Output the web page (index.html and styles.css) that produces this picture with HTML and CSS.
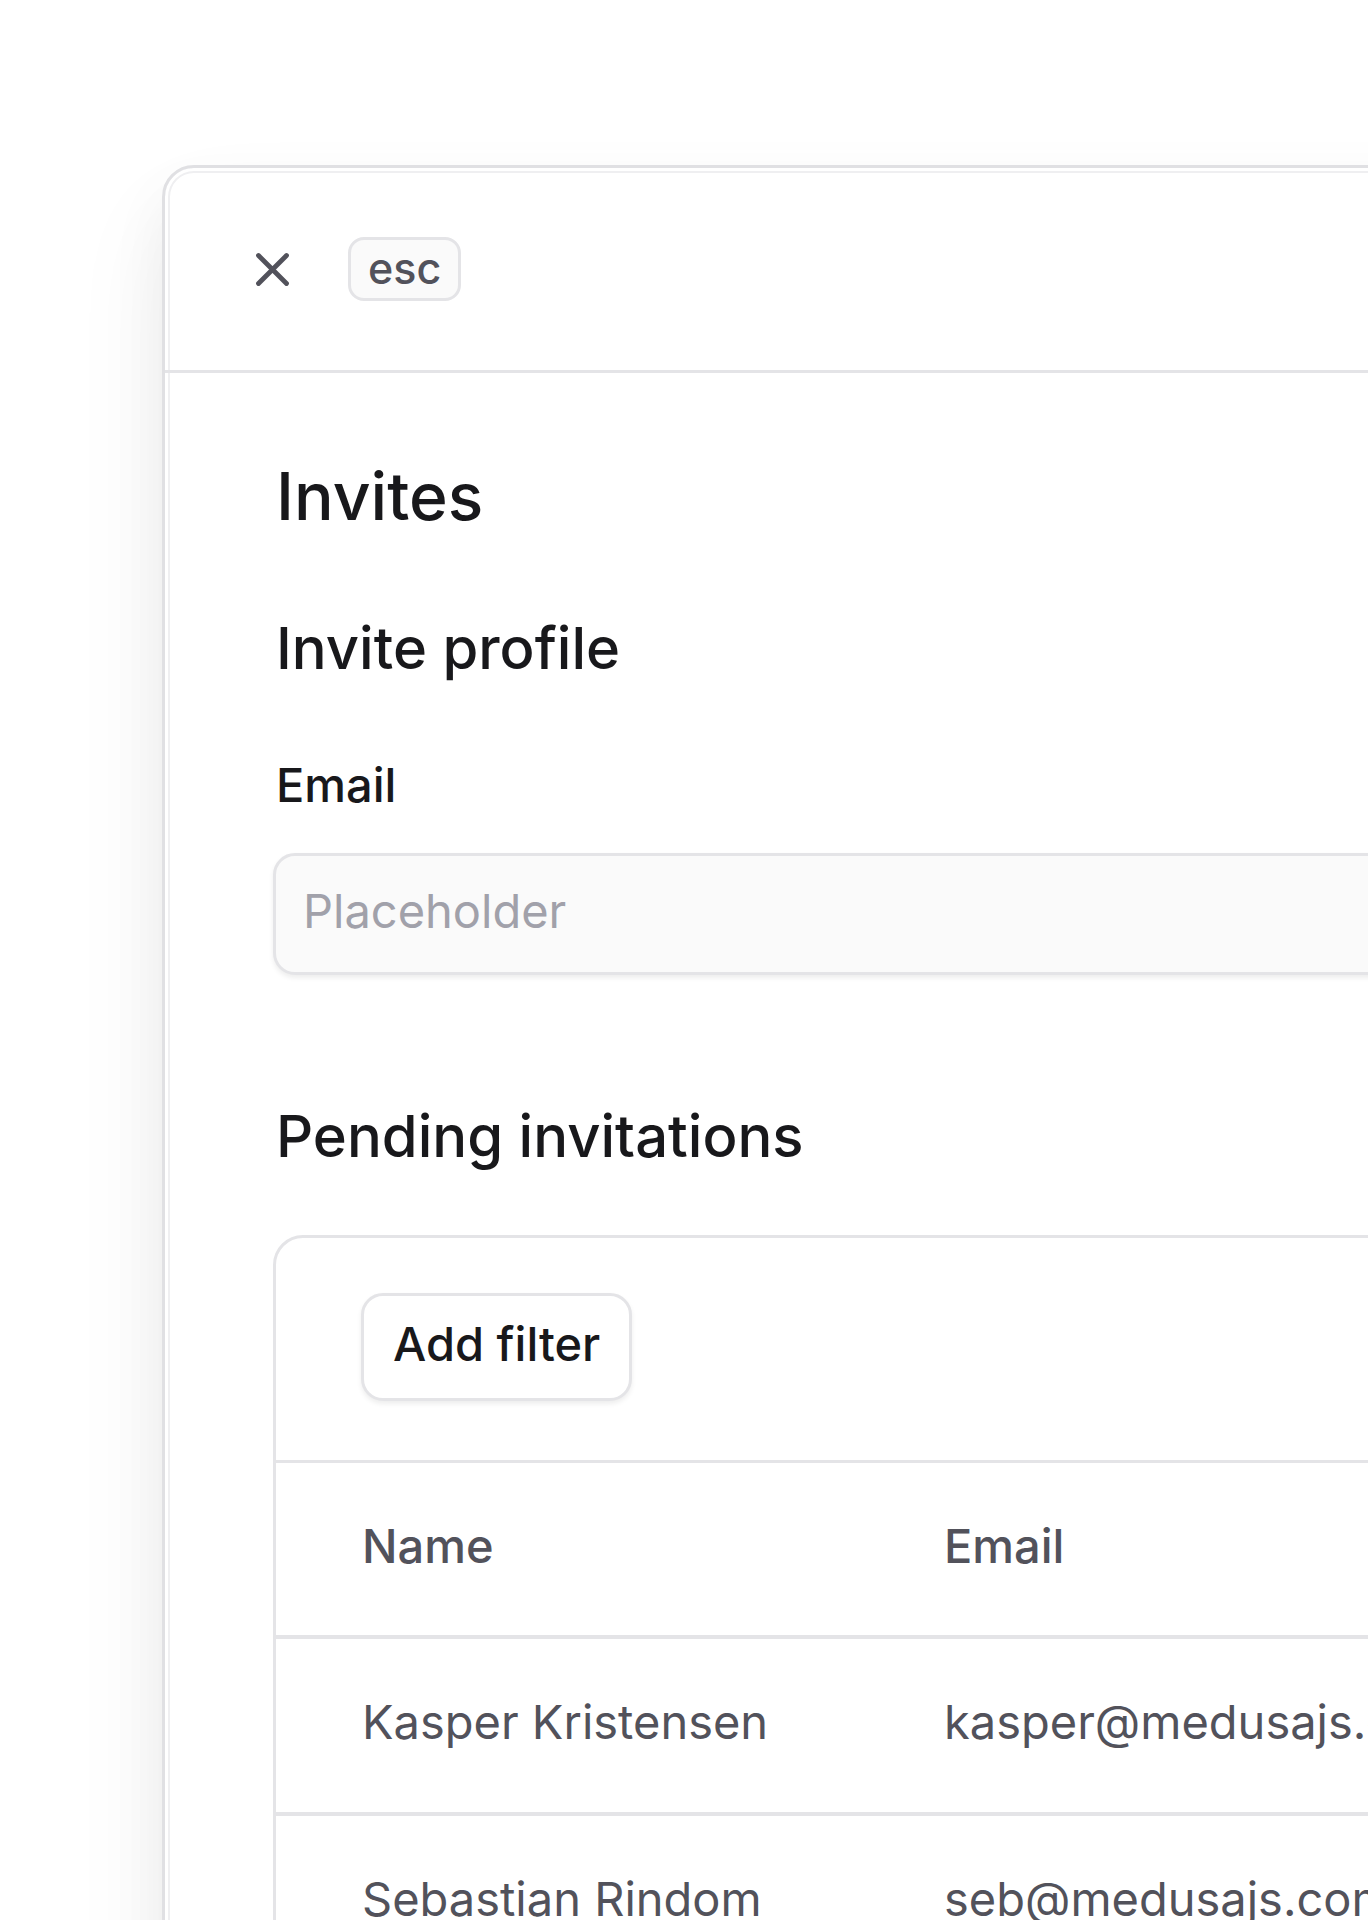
FILE: index.html
```html
<!DOCTYPE html>
<html lang="en">
<head>
<meta charset="utf-8">
<title>Invites</title>
<link rel="stylesheet" href="styles.css">
</head>
<body>
<div class="page">
  <div class="modal">
    <header class="modal-header">
      <button class="icon-btn" type="button" aria-label="Close">
        <svg width="45" height="45" viewBox="0 0 45 45" fill="none" aria-hidden="true">
          <path d="M8.5 8.5L36.5 36.5M36.5 8.5L8.5 36.5" stroke="#52525b" stroke-width="4.8" stroke-linecap="round"/>
        </svg>
      </button>
      <kbd class="kbd">esc</kbd>
    </header>
    <main class="modal-body">
      <h1 class="h1">Invites</h1>
      <section class="invite">
        <h2 class="h2">Invite profile</h2>
        <label class="label" for="email">Email</label>
        <input id="email" class="input" type="email" placeholder="Placeholder">
      </section>
      <section class="pending">
        <h2 class="h2">Pending invitations</h2>
        <div class="table-card">
          <div class="toolbar">
            <button class="btn" type="button">Add filter</button>
          </div>
          <table class="table">
            <colgroup>
              <col class="col-name">
              <col>
            </colgroup>
            <thead>
              <tr>
                <th>Name</th>
                <th>Email</th>
              </tr>
            </thead>
            <tbody>
              <tr>
                <td>Kasper Kristensen</td>
                <td>kasper@medusajs.com</td>
              </tr>
              <tr>
                <td>Sebastian Rindom</td>
                <td>seb@medusajs.com</td>
              </tr>
            </tbody>
          </table>
        </div>
      </section>
    </main>
  </div>
</div>
</body>
</html>
```

FILE: styles.css
```css
* {
  box-sizing: border-box;
}

html,
body {
  margin: 0;
  padding: 0;
}

body {
  width: 1368px;
  height: 1920px;
  overflow: hidden;
  background: #ffffff;
  font-family: Inter, "Noto Sans", "Liberation Sans", sans-serif;
  color: #18181b;
}

.page {
  padding: 165px 0 0 162px;
}

.modal {
  width: 1500px;
  min-height: 1900px;
  background: #ffffff;
  border: 3px solid #e0e0e3;
  border-radius: 32px;
  box-shadow:
    inset 0 0 0 3px #ffffff,
    inset 0 0 0 5px #efeff1,
    0 30px 60px rgba(0, 0, 0, 0.05),
    0 50px 100px rgba(0, 0, 0, 0.06);
}

.modal-header {
  display: flex;
  align-items: center;
  gap: 53px;
  height: 205px;
  padding-left: 85px;
  border-bottom: 3px solid #e4e4e7;
}

.icon-btn {
  display: flex;
  width: 45px;
  height: 45px;
  padding: 0;
  border: 0;
  background: none;
}

.kbd {
  display: inline-flex;
  align-items: center;
  height: 64px;
  padding: 0 17px 2px;
  border: 3px solid #e4e4e7;
  border-radius: 16px;
  background: #fafafa;
  font-family: inherit;
  font-size: 43px;
  font-weight: 500;
  line-height: 1.21;
  color: #52525b;
}

.modal-body {
  padding: 83px 108px 0 108px;
}

.h1 {
  margin: 0 0 0 3px;
  font-size: 66px;
  line-height: 80px;
  font-weight: 500;
}

.h2 {
  margin: 0 0 0 3px;
  font-size: 58px;
  line-height: 70px;
  font-weight: 500;
}

.invite {
  display: flex;
  flex-direction: column;
  margin-top: 77px;
}

.label {
  margin-top: 72px;
  padding-left: 3px;
  font-size: 47px;
  line-height: 60px;
  font-weight: 500;
  color: #18181b;
}

.input {
  margin-top: 38px;
  height: 122px;
  width: 100%;
  padding: 0 27px 7px;
  border: 3px solid #e4e4e7;
  border-radius: 22px;
  background: #fafafa;
  box-shadow: 0 3px 5px rgba(0, 0, 0, 0.07);
  font-family: inherit;
  font-size: 47px;
  color: #18181b;
  outline: none;
}

.input::placeholder {
  color: #a1a1aa;
}

.pending {
  margin-top: 126px;
}

.table-card {
  margin-top: 64px;
  border: 3px solid #e4e4e7;
  border-radius: 30px;
  overflow: hidden;
}

.toolbar {
  display: flex;
  padding: 55px 85px 59px;
  border-bottom: 3px solid #e4e4e7;
}

.btn {
  padding: 19px 29px 25px;
  border: 3px solid #e4e4e7;
  border-radius: 22px;
  background: #ffffff;
  box-shadow: 0 3px 5px rgba(0, 0, 0, 0.07);
  font-family: inherit;
  font-size: 47px;
  line-height: 58px;
  font-weight: 500;
  color: #18181b;
}

.table {
  width: 100%;
  table-layout: fixed;
  border-collapse: separate;
  border-spacing: 0;
}

.col-name {
  width: 582px;
}

.table th,
.table td {
  padding: 54px 0 60px 86px;
  text-align: left;
  font-size: 47px;
  line-height: 58px;
  color: #52525b;
  white-space: nowrap;
  overflow: hidden;
}

.table th {
  font-weight: 500;
}

.table td {
  padding-bottom: 61px;
  font-weight: 400;
  border-top: 4px solid #e4e4e7;
}
```
